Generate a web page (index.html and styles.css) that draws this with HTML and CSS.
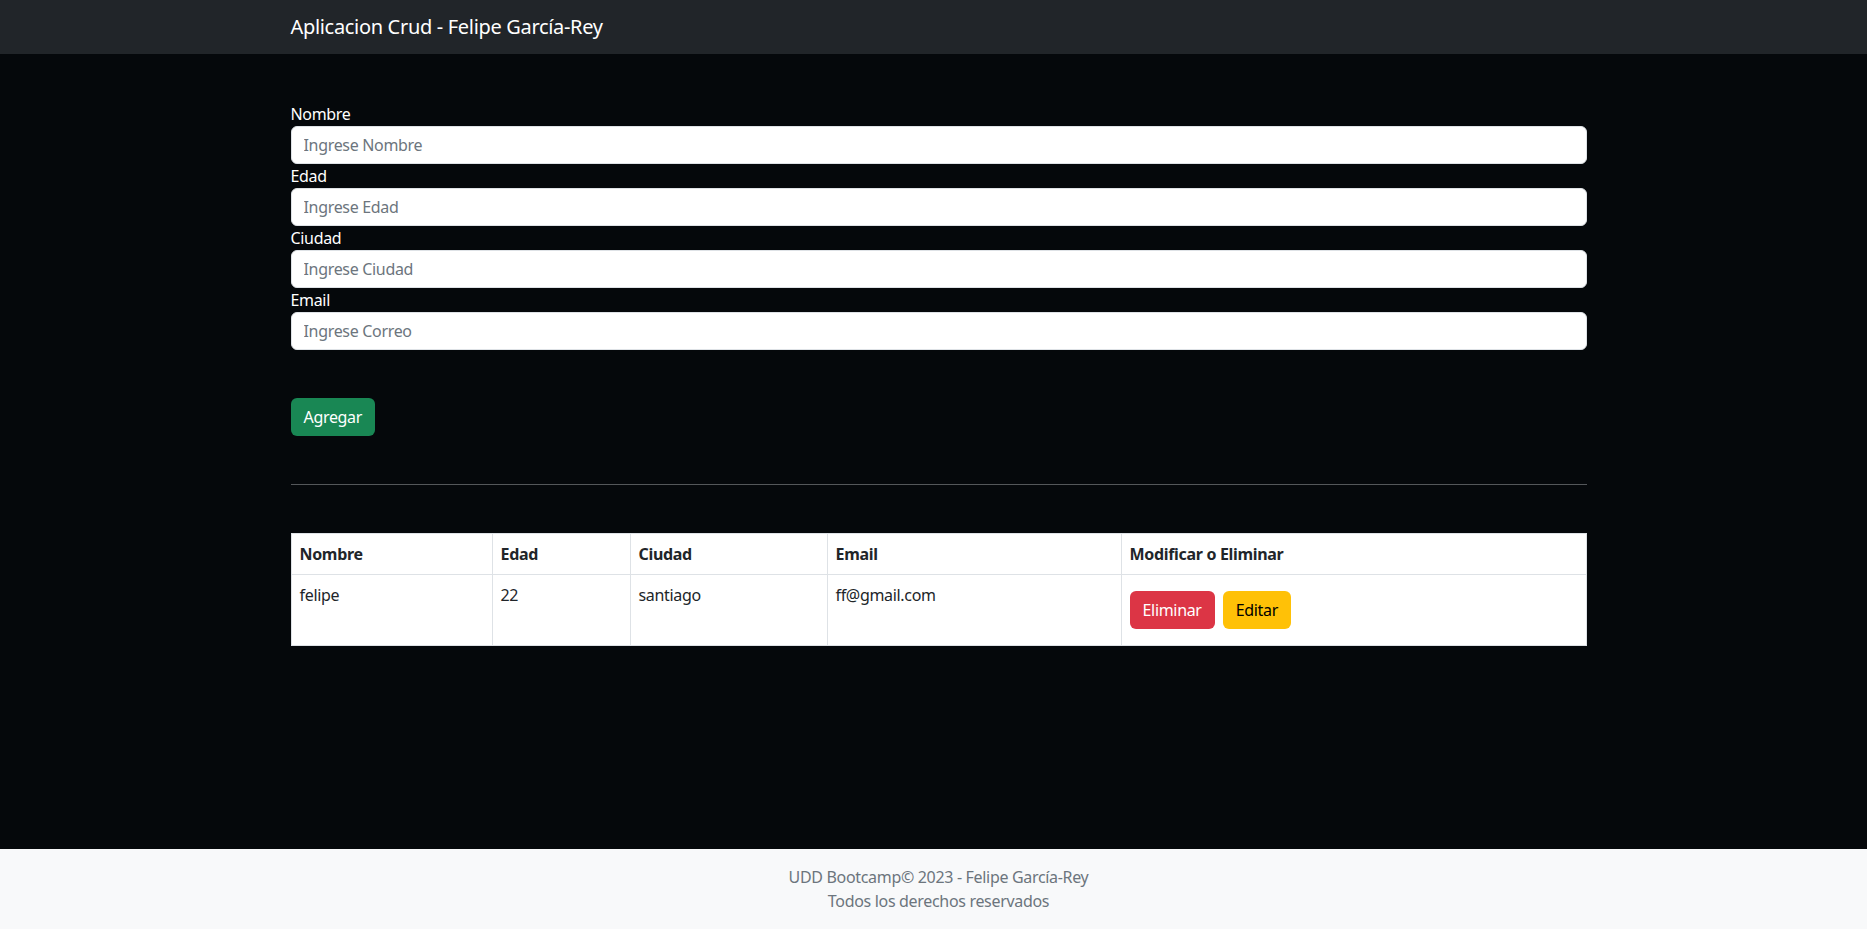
FILE: index.html
```html
<!DOCTYPE html>
<html lang="es">
<head>
<meta charset="utf-8">
<title>Aplicacion Crud</title>
<link rel="stylesheet" href="styles.css">
</head>
<body>
<div class="page">
  <nav class="navbar">
    <div class="container">
      <span class="brand">Aplicacion Crud - Felipe García-Rey</span>
    </div>
  </nav>
  <main class="main">
    <div class="container">
      <form class="form">
        <label class="label" for="nombre">Nombre</label>
        <input class="input" id="nombre" type="text" placeholder="Ingrese Nombre">
        <label class="label" for="edad">Edad</label>
        <input class="input" id="edad" type="text" placeholder="Ingrese Edad">
        <label class="label" for="ciudad">Ciudad</label>
        <input class="input" id="ciudad" type="text" placeholder="Ingrese Ciudad">
        <label class="label" for="email">Email</label>
        <input class="input" id="email" type="text" placeholder="Ingrese Correo">
        <div class="actions">
          <button type="button" class="btn btn-success">Agregar</button>
        </div>
      </form>
      <hr class="divider">
      <table class="table">
        <thead>
          <tr>
            <th class="c1">Nombre</th>
            <th class="c2">Edad</th>
            <th class="c3">Ciudad</th>
            <th class="c4">Email</th>
            <th class="c5">Modificar o Eliminar</th>
          </tr>
        </thead>
        <tbody>
          <tr>
            <td>felipe</td>
            <td>22</td>
            <td>santiago</td>
            <td>ff@gmail.com</td>
            <td>
              <div class="row-actions">
                <button type="button" class="btn btn-danger">Eliminar</button>
                <button type="button" class="btn btn-warning">Editar</button>
              </div>
            </td>
          </tr>
        </tbody>
      </table>
    </div>
  </main>
  <footer class="footer">
    <p class="footer-line">UDD Bootcamp© 2023 - Felipe García-Rey</p>
    <p class="footer-line">Todos los derechos reservados</p>
  </footer>
</div>
</body>
</html>
```

FILE: styles.css
```css
* { box-sizing: border-box; }
html, body { margin: 0; padding: 0; }
body {
  font-family: "Noto Sans", "Open Sans", sans-serif;
  font-size: 16px;
  line-height: 24px;
  letter-spacing: -0.02em;
  background: #05080b;
  color: #fff;
}
.page {
  padding-left: 10px;
  min-height: 929px;
  display: flex;
  flex-direction: column;
}
.container {
  max-width: 1320px;
  margin: 0 auto;
  padding: 0 12px;
  width: 100%;
}
.navbar {
  background: #212529;
  height: 54px;
  display: flex;
  align-items: center;
  margin-left: -10px;
  padding-left: 10px;
}
.brand {
  font-size: 20px;
  line-height: 30px;
  color: #fff;
}
.main {
  flex: 1;
  padding-top: 48px;
}
.form {
  display: flex;
  flex-direction: column;
}
.label {
  display: block;
  line-height: 24px;
  color: #fff;
}
.input {
  display: block;
  width: 100%;
  height: 38px;
  padding: 6px 12px;
  font-family: inherit;
  font-size: 16px;
  line-height: 24px;
  letter-spacing: inherit;
  border: 1px solid #dee2e6;
  border-radius: 6px;
  background: #fff;
  color: #212529;
}
.input::placeholder { color: #6c757d; }
.actions { padding-top: 48px; }
.btn {
  display: inline-block;
  height: 38px;
  padding: 6px 12px;
  font-family: inherit;
  font-size: 16px;
  line-height: 24px;
  letter-spacing: inherit;
  border: 1px solid transparent;
  border-radius: 6px;
  cursor: pointer;
}
.btn-success { background: #198754; color: #fff; }
.btn-danger { background: #dc3545; color: #fff; }
.btn-warning { background: #ffc107; color: #000; }
.divider {
  margin: 48px 0;
  border: 0;
  border-top: 1px solid #54575a;
  height: 0;
}
.table {
  width: 100%;
  border-collapse: collapse;
  background: #fff;
  color: #212529;
  table-layout: fixed;
}
.table th, .table td {
  border: 1px solid #dee2e6;
  padding: 8px;
  text-align: left;
  vertical-align: top;
}
.table th { font-weight: 700; }
.c1 { width: 201px; }
.c2 { width: 138px; }
.c3 { width: 197px; }
.c4 { width: 294px; }
.row-actions {
  display: flex;
  gap: 8px;
  margin: 8px 0;
}
.footer {
  background: #f8f9fa;
  margin-left: -10px;
  padding: 16px 0 16px 10px;
  text-align: center;
  color: #6c757d;
}
.footer-line { margin: 0; }
```
